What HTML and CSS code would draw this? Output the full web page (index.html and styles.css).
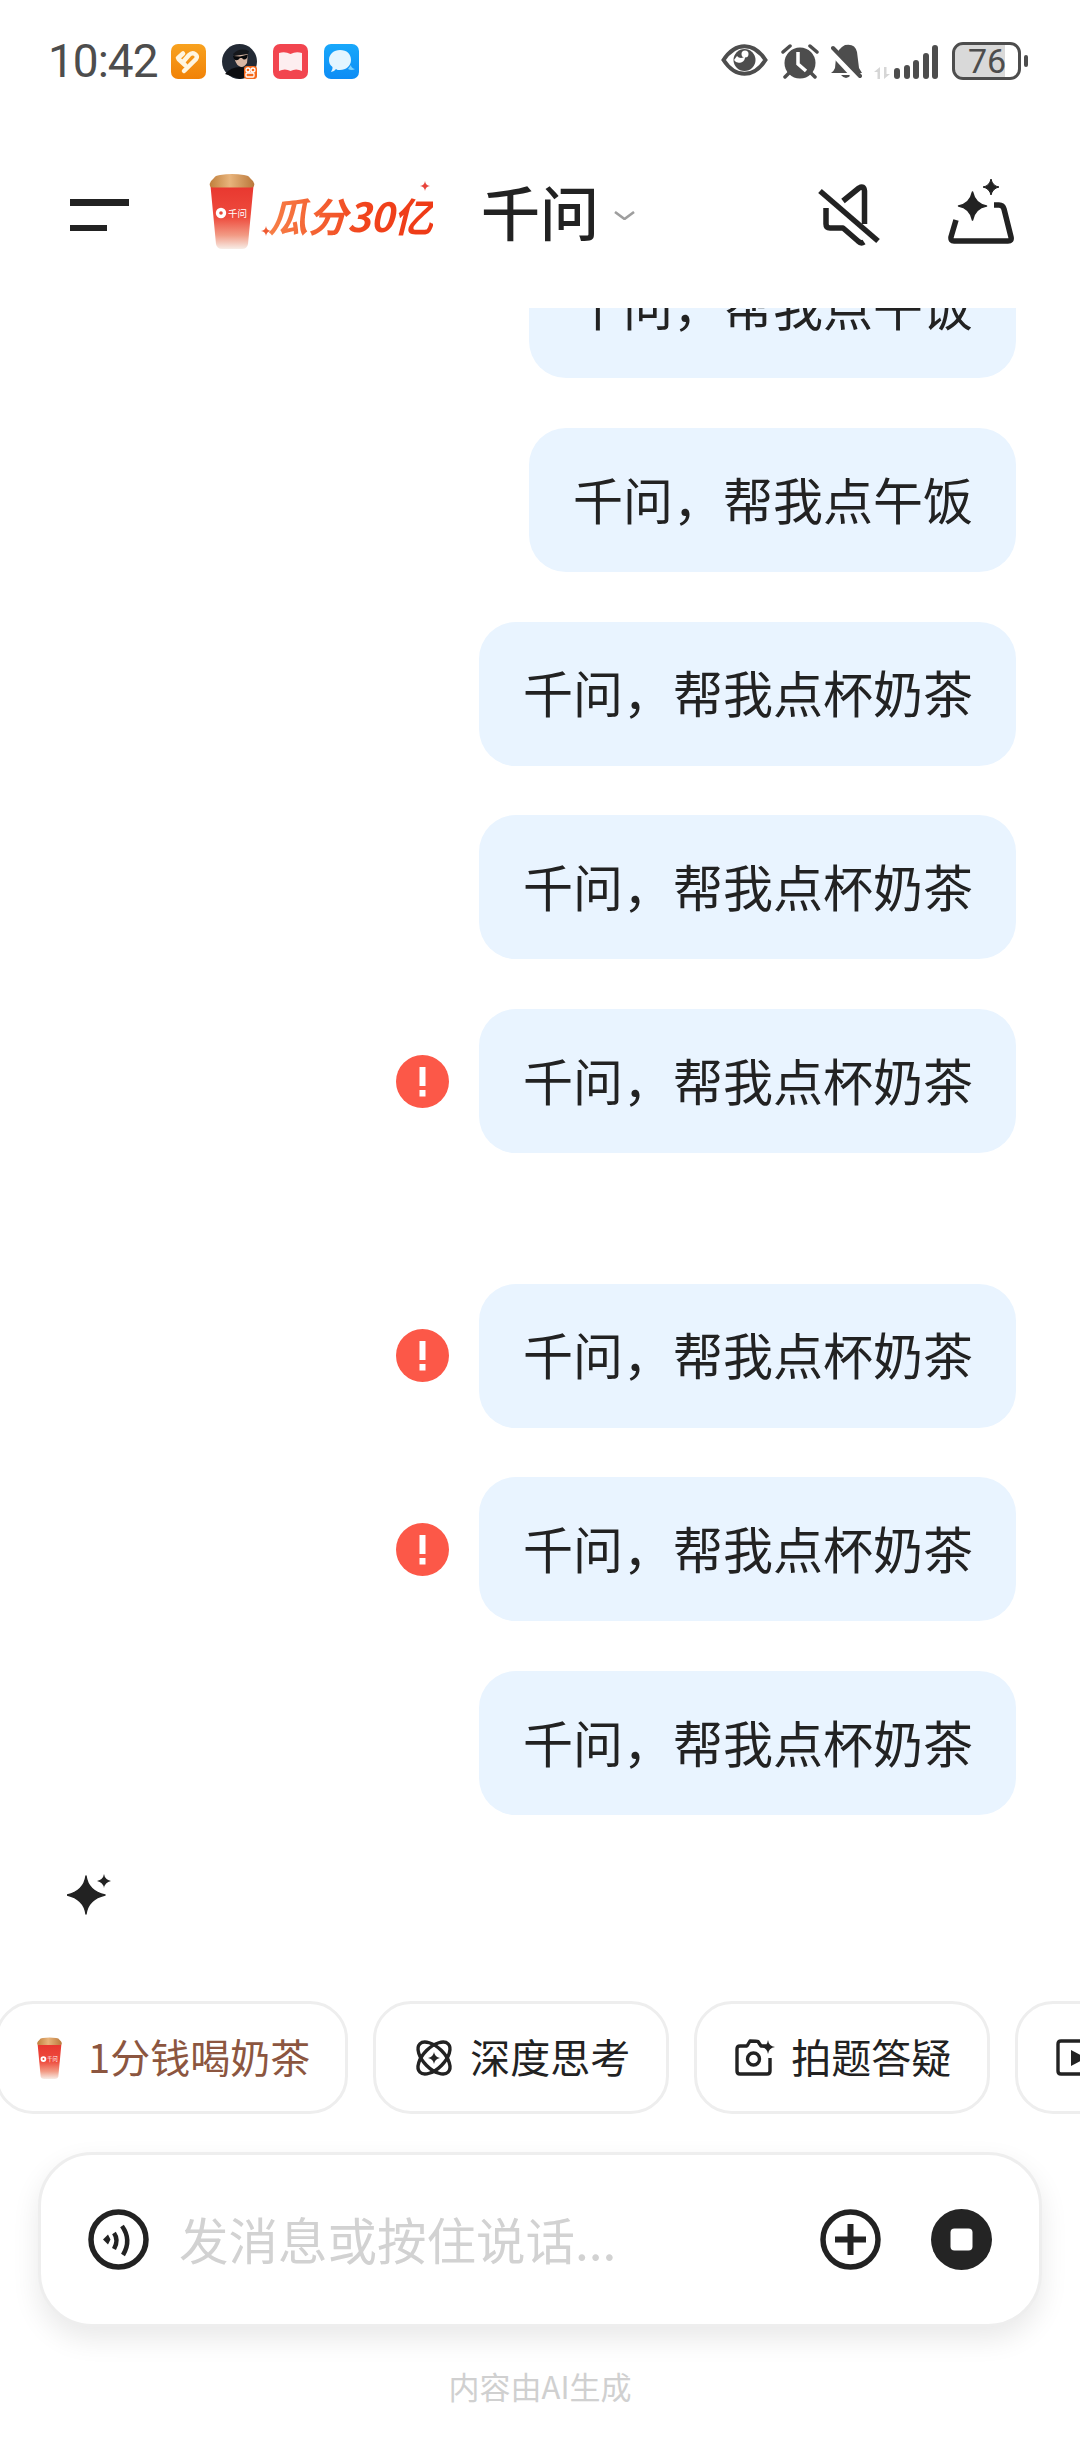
FILE: index.html
```html
<!DOCTYPE html>
<html lang="zh-CN">
<head>
<meta charset="utf-8">
<title>千问</title>
<link rel="stylesheet" href="styles.css">
</head>
<body>
<svg class="sprite" aria-hidden="true">
  <defs>
    <linearGradient id="cupBody" x1="0" y1="0" x2="0" y2="1">
      <stop offset="0" stop-color="#e8372f"/>
      <stop offset=".5" stop-color="#ee4c3e"/>
      <stop offset=".78" stop-color="#f29a84"/>
      <stop offset="1" stop-color="#f7ede7"/>
    </linearGradient>
    <linearGradient id="cupLid" x1="0" y1="0" x2="1" y2="0">
      <stop offset="0" stop-color="#c07f3c"/>
      <stop offset=".45" stop-color="#e8b47c"/>
      <stop offset="1" stop-color="#b9773a"/>
    </linearGradient>
    <linearGradient id="orangeTile" x1="0" y1="0" x2="0" y2="1">
      <stop offset="0" stop-color="#f8a21f"/>
      <stop offset="1" stop-color="#f18207"/>
    </linearGradient>
    <linearGradient id="blueTile" x1="0" y1="0" x2="0" y2="1">
      <stop offset="0" stop-color="#18a8fb"/>
      <stop offset="1" stop-color="#0d8cf5"/>
    </linearGradient>
    <symbol id="cup" viewBox="0 0 48 76">
      <path d="M2.500 13 L45.500 13 L40 71 Q39 76 34 76 L14 76 Q9 76 8 71 Z" fill="url(#cupBody)"/>
      <path d="M6 5 Q7 2.500 12 2 Q24 0 36 2 Q41 2.500 42 5 L45 8 Q47 11 46 13 Q45 14.500 43 14.500 L5 14.500 Q3 14.500 2 13 Q1 11 3 8 Z" fill="url(#cupLid)"/>
      <circle cx="13" cy="40" r="5.200" fill="#fff"/>
      <circle cx="13" cy="40" r="1.800" fill="#e8493a"/>
      <text x="20" y="44" class="cup-label">千问</text>
    </symbol>
    <symbol id="error" viewBox="0 0 53 53">
      <circle cx="26.500" cy="26.500" r="26.500" fill="#fc5848"/>
      <rect x="23.500" y="12" width="6" height="19" fill="#fff"/>
      <rect x="23.500" y="35" width="6" height="6.500" fill="#fff"/>
    </symbol>
  </defs>
</svg>

<div class="page">
  <div class="status">
    <div class="status-left">
      <span class="time">10:42</span>
      <div class="notes">
        <svg class="note" viewBox="0 0 35 35">
          <rect width="35" height="35" rx="7" fill="url(#orangeTile)"/>
          <path d="M7 14 L12 9.500 M7.500 15 L14 21 M13 27 L25 15 Q27 12 24 10 Q21 8 18 11 L12 18" fill="none" stroke="#fff5df" stroke-width="4.500" stroke-linecap="round"/>
        </svg>
        <svg class="note" viewBox="0 0 35 35">
          <circle cx="17.500" cy="17.500" r="17.500" fill="#232a35"/>
          <path d="M3 30 Q9 23 18 23 Q26 23 32 30 L18 35 Z" fill="#0c0d10"/>
          <path d="M12 11 L26 9 L25 19 Q21 25 17 22 Q13 20 12 11 Z" fill="#d8b7a4"/>
          <path d="M11 10 Q18 3 27 7 L26 10 L12 12 Z" fill="#15171b"/>
          <path d="M11 12 L18 12.500 L26 10.500 L25 14 Q22 17 20 14 L18 14 Q15 18 12 15 Z" fill="#07080a"/>
          <rect x="22" y="22" width="13" height="13" rx="3" fill="#f56a1c"/>
          <circle cx="26" cy="26" r="2" fill="none" stroke="#fff" stroke-width="1.300"/>
          <circle cx="31" cy="26" r="2" fill="none" stroke="#fff" stroke-width="1.300"/>
          <rect x="24" y="29" width="8" height="4" rx="1" fill="none" stroke="#fff" stroke-width="1.300"/>
        </svg>
        <svg class="note" viewBox="0 0 35 35">
          <rect width="35" height="35" rx="7" fill="#f2454f"/>
          <path d="M6 9 Q12 7 17.500 10 Q23 7 29 9 L29 27 Q23 24 17.500 27 Q12 24 6 27 Z" fill="#fdeef0"/>
        </svg>
        <svg class="note" viewBox="0 0 35 35">
          <rect width="35" height="35" rx="7" fill="url(#blueTile)"/>
          <path d="M24 25 Q28 27 31 25 Q27 24 27 21 Z" fill="#7fd0fb"/>
          <path d="M5 16 C5 10 10 6 16 6 C23 6 27 10 27 16 C27 22 22 26 16 26 C14 26 13 26 12 25 Q10 28 7 28 Q9 25 8.500 23 C6 21 5 19 5 16 Z" fill="#e3f5ff"/>
        </svg>
      </div>
    </div>
    <div class="status-right">
      <svg class="st-eye" viewBox="0 0 47 32">
        <path d="M2.500 16 C9 6 16 2.200 23.500 2.200 S38 6 44.500 16 C38 26 31 29.800 23.500 29.800 S9 26 2.500 16 Z" fill="none" stroke="#4d4d4d" stroke-width="4"/>
        <circle cx="23.500" cy="16" r="11" fill="#4d4d4d"/>
        <path d="M13 16 A6 6 0 0 0 24 12 A5 5 0 0 1 16 12 Z" fill="#fff"/>
        <circle cx="24" cy="10" r="3.500" fill="#fff"/>
      </svg>
      <svg class="st-alarm" viewBox="0 0 38 35">
        <circle cx="19" cy="19" r="15.500" fill="#4d4d4d"/>
        <path d="M2 8 L9 2 M36 8 L29 2 M8 29 L4 33 M30 29 L34 33" stroke="#4d4d4d" stroke-width="3.500" stroke-linecap="round"/>
        <path d="M17 8 L17 20 L25 27" fill="none" stroke="#fff" stroke-width="3.500"/>
      </svg>
      <svg class="st-bell" viewBox="0 0 31 35">
        <path d="M14 1 Q24 -1 26 8 L28 24 L31 29 L0 29 Q3 27 4 24 L5 14 Q6 5 14 1 Z" fill="#4d4d4d"/>
        <path d="M10 31 Q15 37 20 31 Z" fill="#4d4d4d"/>
        <path d="M0 7 L25 34" stroke="#fff" stroke-width="6"/>
        <path d="M2 4 L29 32" stroke="#4d4d4d" stroke-width="4" stroke-linecap="round"/>
      </svg>
      <div class="signal">
        <svg class="st-arrows" viewBox="0 0 16 12">
          <path d="M6 0 L6 12 L3.500 12 L3.500 5 L0 5 Z M10 12 L10 0 L12.500 0 L12.500 7 L16 7 Z" fill="#d6d6d6"/>
        </svg>
        <div class="bars">
          <span class="bar b1"></span>
          <span class="bar b2"></span>
          <span class="bar b3"></span>
          <span class="bar b4"></span>
          <span class="bar b5"></span>
        </div>
      </div>
      <div class="battery-wrap">
        <div class="battery">
          <span class="battery-num">76</span>
        </div>
        <span class="battery-nub"></span>
      </div>
    </div>
  </div>

  <header class="header">
    <div class="menu"><span class="menu-a"></span><span class="menu-b"></span></div>
    <svg class="promo-cup"><use href="#cup"/></svg>
    <div class="promo-text-wrap">
      <span class="promo-text">瓜分30亿</span>
      <svg class="promo-spark-a" viewBox="0 0 10 10"><path d="M5 0 Q5.500 4.500 10 5 Q5.500 5.500 5 10 Q4.500 5.500 0 5 Q4.500 4.500 5 0 Z" fill="#f05a30"/></svg>
      <svg class="promo-spark-b" viewBox="0 0 10 10"><path d="M5 0 Q5.500 4.500 10 5 Q5.500 5.500 5 10 Q4.500 5.500 0 5 Q4.500 4.500 5 0 Z" fill="#e8433a"/></svg>
    </div>
    <h1 class="title">千问</h1>
    <svg class="chevron" viewBox="0 0 21 9"><path d="M1 1 L10.500 8 L20 1" fill="none" stroke="#9e9e9e" stroke-width="2.600"/></svg>
    <div class="spacer"></div>
    <svg class="ic-mute" viewBox="0 0 62 62">
      <path d="M25 17 L41 4 Q46 1 46.500 7 L46.500 40 M8 24 L8 40 Q8 44 12 44 L25 44 L40 57 Q43 60 46 58" fill="none" stroke="#222" stroke-width="5.500" stroke-linejoin="round"/>
      <path d="M2 7 L60 57" stroke="#222" stroke-width="5.500"/>
    </svg>
    <svg class="ic-new" viewBox="0 0 67 65">
      <path d="M9 41 L4 58 Q3.500 62 7 62 L61 62 Q65 62 64 58 L57 30 Q56 26 52 26 L47 26" fill="none" stroke="#222" stroke-width="5.500" stroke-linejoin="round"/>
      <path d="M25.500 13 Q28 25 39.500 27 Q28 29 25.500 41 Q23 29 11.500 27 Q23 25 25.500 13 Z" fill="#222" stroke="#222" stroke-width="1.500" stroke-linejoin="round"/>
      <path d="M44 0 Q45.500 7 52 8 Q45.500 9.500 44 16 Q42.500 9.500 36 8 Q42.500 7 44 0 Z" fill="#222" stroke="#222" stroke-width="1" stroke-linejoin="round"/>
    </svg>
  </header>

  <main class="list">
    <div class="row"><div class="bubble">千问，帮我点午饭</div></div>
    <div class="row"><div class="bubble">千问，帮我点午饭</div></div>
    <div class="row"><div class="bubble">千问，帮我点杯奶茶</div></div>
    <div class="row"><div class="bubble">千问，帮我点杯奶茶</div></div>
    <div class="row"><svg class="err"><use href="#error"/></svg><div class="bubble">千问，帮我点杯奶茶</div></div>
    <div class="row row-spaced"><svg class="err"><use href="#error"/></svg><div class="bubble">千问，帮我点杯奶茶</div></div>
    <div class="row"><svg class="err"><use href="#error"/></svg><div class="bubble">千问，帮我点杯奶茶</div></div>
    <div class="row"><div class="bubble">千问，帮我点杯奶茶</div></div>
  </main>

  <div class="thinking">
    <svg class="stars" viewBox="0 0 46 42">
      <path d="M19 2 Q21 17 38 21 Q21 25 19 40 Q17 25 0 21 Q17 17 19 2 Z" fill="#222" stroke="#222" stroke-width="1.500" stroke-linejoin="round"/>
      <path d="M37 0 Q37.800 5.500 44 7 Q37.800 8.500 37 14 Q36.200 8.500 30 7 Q36.200 5.500 37 0 Z" fill="#222"/>
    </svg>
  </div>

  <div class="chips">
    <div class="chip chip-promo">
      <svg class="chip-cup"><use href="#cup"/></svg>
      <span>1分钱喝奶茶</span>
    </div>
    <div class="chip">
      <svg class="chip-ic" viewBox="0 0 40 40">
        <ellipse cx="20" cy="20" rx="20" ry="10.500" transform="rotate(45 20 20)" fill="none" stroke="#222" stroke-width="3.400"/>
        <ellipse cx="20" cy="20" rx="20" ry="10.500" transform="rotate(-45 20 20)" fill="none" stroke="#222" stroke-width="3.400"/>
        <path d="M20 14 Q20.800 19.200 26 20 Q20.800 20.800 20 26 Q19.200 20.800 14 20 Q19.200 19.200 20 14 Z" fill="#222"/>
      </svg>
      <span>深度思考</span>
    </div>
    <div class="chip">
      <svg class="chip-ic" viewBox="0 0 40 40">
        <path d="M31 8 L26 8 L23 3.500 Q22 3 15 3 L12 8 L5 8 Q2 8 2 11 L2 33 Q2 36 5 36 L32 36 Q35 36 35 33 L35 20" fill="none" stroke="#222" stroke-width="3.400" stroke-linejoin="round"/>
        <circle cx="18.500" cy="21" r="6" fill="none" stroke="#222" stroke-width="3.400"/>
        <path d="M33 2 Q33.800 8.200 40 9 Q33.800 9.800 33 16 Q32.200 9.800 26 9 Q32.200 8.200 33 2 Z" fill="#222"/>
      </svg>
      <span>拍题答疑</span>
    </div>
    <div class="chip chip-last">
      <svg class="chip-ic" viewBox="0 0 40 40">
        <path d="M34 3 L5 3 Q2 3 2 6 L2 33 Q2 36 5 36 L34 36" fill="none" stroke="#222" stroke-width="3.400"/>
        <path d="M15 12 L30 20 L15 28 Z" fill="#222"/>
      </svg>
    </div>
  </div>

  <div class="composer">
    <svg class="round-ic" viewBox="0 0 61 61">
      <circle cx="30.500" cy="30.500" r="27.500" fill="none" stroke="#222" stroke-width="5.500"/>
      <path d="M15 30.500 L20 25.500 L22.500 30.500 L20 35.500 Z" fill="#222"/>
      <path d="M26 24 Q31 31 26 40" fill="none" stroke="#222" stroke-width="4.500"/>
      <path d="M34 17 Q44 31 35 46" fill="none" stroke="#222" stroke-width="4.500"/>
    </svg>
    <span class="placeholder">发消息或按住说话...</span>
    <svg class="round-ic" viewBox="0 0 61 61">
      <circle cx="30.500" cy="30.500" r="27.500" fill="none" stroke="#222" stroke-width="5.500"/>
      <path d="M30.500 15 L30.500 46 M15 30.500 L46 30.500" stroke="#222" stroke-width="6"/>
    </svg>
    <svg class="round-ic stop-ic" viewBox="0 0 61 61">
      <circle cx="30.500" cy="30.500" r="30.500" fill="#242424"/>
      <rect x="19.500" y="19.500" width="22" height="22" rx="4" fill="#fff"/>
    </svg>
  </div>

  <footer class="disclaimer">内容由AI生成</footer>
</div>
</body>
</html>
```

FILE: styles.css
```css
* { box-sizing: border-box; }

html, body {
  margin: 0;
  padding: 0;
  background: #fff;
}

body {
  font-family: "Noto Sans CJK SC", "Noto Sans", sans-serif;
  color: #222;
}

.sprite {
  position: absolute;
  width: 0;
  height: 0;
}

.cup-label {
  font-family: "Noto Sans CJK SC", sans-serif;
  font-size: 9.500px;
  fill: #fff;
}

.page {
  width: 1080px;
  height: 2440px;
  display: flex;
  flex-direction: column;
  overflow: hidden;
}

/* status bar */
.status {
  flex: none;
  height: 122px;
  padding: 0 52px 0 48px;
  display: flex;
  align-items: center;
  justify-content: space-between;
}

.status-left {
  display: flex;
  align-items: center;
  gap: 13px;
}

.time {
  font-family: Roboto, sans-serif;
  font-size: 46px;
  line-height: 46px;
  letter-spacing: -1px;
  color: #4d4d4d;
}

.notes {
  display: flex;
  gap: 16px;
}

.note {
  width: 35px;
  height: 35px;
  display: block;
}

.status-right {
  display: flex;
  align-items: center;
}

.st-eye {
  width: 47px;
  height: 32px;
  margin-right: 13px;
  margin-top: -3px;
}

.st-alarm {
  width: 38px;
  height: 35px;
  margin-right: 12px;
}

.st-bell {
  width: 31px;
  height: 35px;
  margin-right: 12px;
}

.signal {
  display: flex;
  align-items: flex-end;
  height: 35px;
  gap: 4px;
  margin-right: 14px;
}

.st-arrows {
  width: 16px;
  height: 12px;
}

.bars {
  display: flex;
  align-items: flex-end;
  gap: 3.500px;
}

.bar {
  width: 6px;
  border-radius: 3px;
  background: #4d4d4d;
}

.b1 { height: 11px; }
.b2 { height: 14px; }
.b3 { height: 19px; }
.b4 { height: 26px; }
.b5 { height: 34px; }

.battery-wrap {
  display: flex;
  align-items: center;
  gap: 3px;
}

.battery {
  width: 69px;
  height: 38px;
  padding-left: 13px;
  display: flex;
  align-items: center;
  border: 3px solid #4d4d4d;
  border-radius: 11px;
  background: linear-gradient(90deg, #d9d9d9 50px, #fff 50px);
  background-clip: padding-box;
}

.battery-num {
  font-family: Roboto, sans-serif;
  font-size: 34px;
  line-height: 32px;
  color: #4d4d4d;
}

.battery-nub {
  width: 4px;
  height: 12px;
  border-radius: 2px;
  background: #4d4d4d;
}

/* header */
.header {
  flex: none;
  height: 186px;
  padding: 0 66px 0 70px;
  display: flex;
  align-items: center;
}

.menu {
  width: 59px;
  display: flex;
  flex-direction: column;
  gap: 19px;
  margin-right: 79px;
}

.menu-a, .menu-b {
  display: block;
  height: 6.500px;
  background: #222;
}

.menu-b { width: 37px; }

.promo-cup {
  width: 48px;
  height: 76px;
  margin-right: 12px;
  margin-top: -8px;
}

.promo-text-wrap {
  position: relative;
  width: 213px;
}

.promo-text {
  display: inline-block;
  font-size: 40px;
  line-height: 44px;
  font-weight: 700;
  font-style: italic;
  letter-spacing: -.5px;
  background: linear-gradient(90deg, #f78048, #f1431c 60%, #ee3a16);
  -webkit-background-clip: text;
  background-clip: text;
  color: transparent;
}

.promo-spark-a {
  position: absolute;
  left: -7px;
  top: 33px;
  width: 10px;
  height: 10px;
}

.promo-spark-b {
  position: absolute;
  left: 152px;
  top: -12px;
  width: 10px;
  height: 10px;
}

.title {
  margin: -8px 0 0 0;
  font-size: 59px;
  line-height: 70px;
  font-weight: 500;
  color: #222;
}

.chevron {
  width: 21px;
  height: 9px;
  margin-left: 15px;
}

.spacer { flex: 1; }

.ic-mute {
  width: 62px;
  height: 62px;
  margin-right: 67px;
}

.ic-new {
  width: 67px;
  height: 65px;
  margin-top: -8px;
}

/* messages */
.list {
  flex: 1;
  min-height: 0;
  padding-right: 64px;
  display: flex;
  flex-direction: column;
  justify-content: flex-end;
  align-items: flex-end;
  gap: 49.670px;
  overflow: hidden;
}

.row {
  flex: none;
  display: flex;
  align-items: center;
  gap: 30px;
}

.row-spaced { margin-top: 81px; }

.bubble {
  height: 144px;
  padding: 0 43px 5px 44px;
  display: flex;
  align-items: center;
  font-size: 50px;
  color: #222;
  background: #e9f4ff;
  border-radius: 37px;
}

.err {
  width: 53px;
  height: 53px;
}

/* thinking indicator */
.thinking {
  flex: none;
  height: 186px;
  padding: 59px 0 0 67px;
}

.stars {
  display: block;
  width: 46px;
  height: 42px;
}

/* chips */
.chips {
  flex: none;
  height: 113px;
  margin-left: -5px;
  display: flex;
  gap: 25px;
}

.chip {
  flex: none;
  height: 113px;
  padding: 0 36px 4px 38px;
  display: flex;
  align-items: center;
  gap: 16px;
  font-size: 40px;
  color: #222;
  background: #fff;
  border: 3px solid #eee;
  border-radius: 38px;
}

.chip-promo {
  gap: 25px;
  color: #8c5640;
  padding-right: 35px;
}

.chip-cup {
  width: 27px;
  height: 42px;
  margin-top: 4px;
}

.chip-ic {
  width: 40px;
  height: 40px;
  margin-top: 4px;
}

.chip-last {
  padding-right: 40px;
}

/* composer */
.composer {
  flex: none;
  height: 175px;
  margin: 38px 38px 0;
  padding: 0 47px;
  display: flex;
  align-items: center;
  background: #fff;
  border: 3px solid #eee;
  border-radius: 54px;
  box-shadow: 0 12px 28px rgba(0, 0, 0, .09);
}

.round-ic {
  flex: none;
  width: 61px;
  height: 61px;
}

.placeholder {
  flex: 1;
  margin: 0 0 2px 30px;
  font-size: 49.500px;
  line-height: 60px;
  color: #d2d2d2;
}

.stop-ic { margin-left: 50px; }

.disclaimer {
  flex: none;
  height: 113px;
  padding-top: 41px;
  text-align: center;
  font-size: 31px;
  line-height: 36px;
  color: #d0d0d0;
}
```
